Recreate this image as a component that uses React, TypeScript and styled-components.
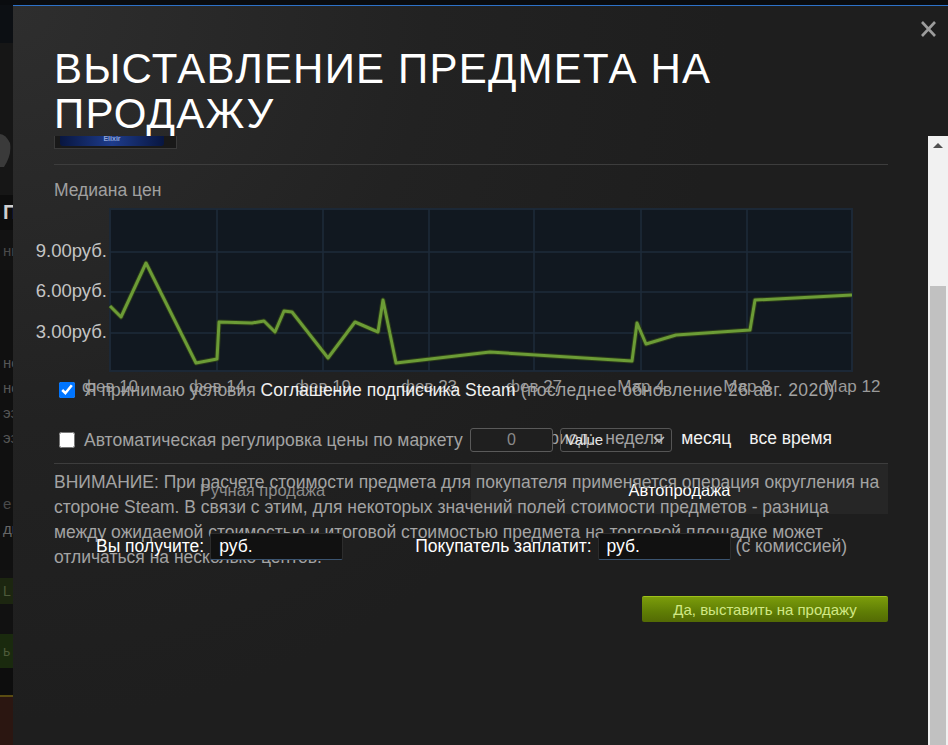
import styled, { createGlobalStyle } from "styled-components";

const GlobalStyle = createGlobalStyle`
  html, body {
    margin: 0;
    padding: 0;
    background: #0b0d10;
  }
  body {
    font-family: "Liberation Sans", Arial, sans-serif;
    overflow: hidden;
  }
`;

const points: [number, number][] = [
  [56, 100], [67, 111], [92, 57], [142, 157], [163, 153], [165, 116],
  [198, 117], [210, 115], [221, 126], [230, 105], [238, 106], [274, 152],
  [301, 116], [324, 126], [329, 94], [342, 157], [436, 146], [578, 155],
  [583, 117], [592, 138], [622, 129], [696, 124], [701, 94], [798, 89],
];

const xTicks = [
  { x: 56, label: "фев 10" },
  { x: 163, label: "фев 14" },
  { x: 269, label: "фев 19" },
  { x: 375, label: "фев 23" },
  { x: 480, label: "фев 27" },
  { x: 587, label: "Мар 4" },
  { x: 693, label: "Мар 8" },
  { x: 798, label: "Мар 12" },
];

const yTicks = [
  { y: 46, label: "9.00руб." },
  { y: 86, label: "6.00руб." },
  { y: 127, label: "3.00руб." },
];

const stripText = ["нс", "нс", "эз", "эз"];

function App() {
  const path = points.map(([x, y], i) => `${i ? "L" : "M"}${x} ${y}`).join(" ");
  return (
    <>
      <GlobalStyle />
      <Page>
        <TopBand />
        <Stage>
          <LeftStrip>
            <Band $h={38} $bg="#0c0f13" />
            <Band $h={152} $bg="#161616">
              <svg width="13" height="152">
                <path d="M-6 92 Q 4 88 10 100 Q 12 112 4 124 L -6 124 Z" fill="#3a3a3a" />
              </svg>
            </Band>
            <Band $h={35} $bg="#0d0d0d">
              <StripWord $color="#cfcfcf" $size={20} $bold>П</StripWord>
            </Band>
            <Band $h={40} $bg="#121212">
              <StripWord $color="#4a4a4a" $size={15}>нк</StripWord>
            </Band>
            <Band $h={300} $bg="#101010">
              <StripLines>
                {stripText.map((t, i) => (
                  <StripWord key={i} $color="#555" $size={15}>{t}</StripWord>
                ))}
                <StripGap />
                <StripWord $color="#4a4a4a" $size={15}>е</StripWord>
                <StripWord $color="#666" $size={15}>ди</StripWord>
              </StripLines>
            </Band>
            <Band $h={8} $bg="#121212" />
            <Band $h={26} $bg="#1c2610">
              <StripWord $color="#4d5a3a" $size={14}>L Г</StripWord>
            </Band>
            <Band $h={30} $bg="#111" />
            <Band $h={34} $bg="#1a2a0e">
              <StripWord $color="#4d5a3a" $size={14}>ь I</StripWord>
            </Band>
            <Band $h={27} $bg="#0d0d0d" />
            <Band $h={2} $bg="#5a4c12" />
            <Band $h={60} $bg="#2b1611" />
          </LeftStrip>

          <Modal>
            <CloseButton aria-label="close">
              <svg width="17" height="18" viewBox="0 0 17 18">
                <path d="M2 2 L15 16 M15 2 L2 16" stroke="#9c9c9c" strokeWidth="2.6" />
              </svg>
            </CloseButton>
            <Header>
              <Title>ВЫСТАВЛЕНИЕ ПРЕДМЕТА НА ПРОДАЖУ</Title>
            </Header>

            <Body>
              <Content>
                <ItemThumb>
                  <ThumbArt>Elixir</ThumbArt>
                </ItemThumb>
                <Rule $top={15} />
                <SectionLabel>Медиана цен</SectionLabel>

                <Chart width="834" height="170" viewBox="0 0 834 170">
                  <rect x="56" y="3" width="742" height="162" fill="#111820" stroke="#1c2836" strokeWidth="2" />
                  {xTicks.slice(1, -1).map((t) => (
                    <line key={t.x} x1={t.x} y1="3" x2={t.x} y2="165" stroke="#1e2b3a" strokeWidth="1.5" />
                  ))}
                  {yTicks.map((t) => (
                    <line key={t.y} x1="56" y1={t.y} x2="798" y2={t.y} stroke="#1e2b3a" strokeWidth="1.5" />
                  ))}
                  <path d={path} fill="none" stroke="#2a3a1a" strokeWidth="5" strokeLinejoin="round" />
                  <path d={path} fill="none" stroke="#6c9c36" strokeWidth="3" strokeLinejoin="round" />
                  {yTicks.map((t) => (
                    <AxisText key={t.label} x="53" y={t.y + 5} textAnchor="end" fill="#c4c4c4" $size={18.5}>
                      {t.label}
                    </AxisText>
                  ))}
                  {xTicks.map((t) => (
                    <AxisText key={t.label} x={t.x} y="186" textAnchor="middle" fill="#9a9a9a" $size={17}>
                      {t.label}
                    </AxisText>
                  ))}
                </Chart>

                <CheckRow $top={2}>
                  <Check type="checkbox" defaultChecked />
                  <span>
                    <Muted>Я принимаю условия </Muted>
                    <Bright>Соглашение подписчика Steam</Bright>
                    <Muted $spread> (последнее обновление 26 авг. 2020)</Muted>
                  </span>
                </CheckRow>

                <CheckRow $top={26}>
                  <Check type="checkbox" />
                  <Muted>Автоматическая регулировка цены по маркету</Muted>
                  <PriceInput>0</PriceInput>
                  <ValueSelect>
                    <span>Value</span>
                    <svg width="12" height="8" viewBox="0 0 12 8">
                      <path d="M1 1 L6 6 L11 1" fill="none" stroke="#bdbdbd" strokeWidth="1.6" />
                    </svg>
                  </ValueSelect>
                </CheckRow>

                <PeriodBar>
                  <PeriodOption $active={false} $label>Период:</PeriodOption>
                  <PeriodOption $active={false}>неделя</PeriodOption>
                  <PeriodOption $active>месяц</PeriodOption>
                  <PeriodOption $active>все время</PeriodOption>
                </PeriodBar>

                <Rule $top={11} />

                <Tabs>
                  <Tab $active={false}>Ручная продажа</Tab>
                  <Tab $active>Автопродажа</Tab>
                </Tabs>

                <Warning>
                  ВНИМАНИЕ: При расчете стоимости предмета для покупателя применяется операция округления на
                  стороне Steam. В связи с этим, для некоторых значений полей стоимости предметов - разница
                  между ожидаемой стоимостью и итоговой стоимостью предмета на торговой площадке может
                  отличаться на несколько центов.
                </Warning>

                <PurchaseRow>
                  <FieldLabel>Вы получите:</FieldLabel>
                  <PriceField>руб.</PriceField>
                  <FieldLabel $gap={67}>Покупатель заплатит:</FieldLabel>
                  <PriceField>руб.</PriceField>
                  <Muted>(с комиссией)</Muted>
                </PurchaseRow>

                <Actions>
                  <SellButton>Да, выставить на продажу</SellButton>
                </Actions>
              </Content>

              <Scrollbar>
                <ScrollArrow>
                  <svg width="12" height="6" viewBox="0 0 12 6">
                    <path d="M1 6 L6 1 L11 6 Z" fill="#505050" />
                  </svg>
                </ScrollArrow>
                <ScrollThumb />
              </Scrollbar>
            </Body>
          </Modal>
        </Stage>
      </Page>
    </>
  );
}

const Page = styled.div`
  width: 948px;
  height: 745px;
  display: flex;
  flex-direction: column;
  overflow: hidden;
`;

const TopBand = styled.div`
  height: 5px;
  background: #0a0c0f;
`;

const Stage = styled.div`
  flex: 1;
  display: flex;
  min-height: 0;
`;

const LeftStrip = styled.div`
  width: 13px;
  display: flex;
  flex-direction: column;
  overflow: hidden;
`;

const Band = styled.div<{ $h: number; $bg: string }>`
  flex: 0 0 ${({ $h }) => $h}px;
  background: ${({ $bg }) => $bg};
  display: flex;
  align-items: center;
  overflow: hidden;
`;

const StripLines = styled.div`
  display: flex;
  flex-direction: column;
  align-self: flex-start;
  padding-top: 80px;
`;

const StripGap = styled.div`
  height: 41px;
`;

const StripWord = styled.div<{ $color: string; $size: number; $bold?: boolean }>`
  color: ${({ $color }) => $color};
  font-size: ${({ $size }) => $size}px;
  font-weight: ${({ $bold }) => ($bold ? 700 : 400)};
  line-height: 25px;
  white-space: nowrap;
  margin-left: 3px;
`;

const Modal = styled.div`
  flex: 1;
  position: relative;
  display: flex;
  flex-direction: column;
  border-top: 1px solid #2d72c9;
  background: radial-gradient(circle at 0 0, #2e2e2e 0%, #222 35%, #1e1e1e 60%);
  min-width: 0;
`;

const CloseButton = styled.div`
  position: absolute;
  top: 14px;
  right: 11px;
  width: 17px;
  height: 18px;
  display: flex;
`;

const Header = styled.div`
  flex: 0 0 129px;
  box-sizing: border-box;
  padding: 40px 0 0 41px;
`;

const Title = styled.h1`
  margin: 0;
  width: 720px;
  font-size: 42px;
  line-height: 45px;
  font-weight: 400;
  letter-spacing: 1.2px;
  color: #ffffff;
`;

const Body = styled.div`
  flex: 1;
  display: flex;
  min-height: 0;
`;

const Content = styled.div`
  flex: 1;
  position: relative;
  padding: 0 40px 0 41px;
  display: flex;
  flex-direction: column;
  font-size: 17.5px;
  color: #a3a3a3;
`;

const ItemThumb = styled.div`
  width: 123px;
  height: 13px;
  box-sizing: border-box;
  border: 1px solid #3a3a3a;
  border-top: none;
  background: #191919;
  padding: 0 12px 2px 5px;
`;

const ThumbArt = styled.div`
  height: 100%;
  border-radius: 0 0 3px 3px;
  background: linear-gradient(to right, #081640, #1e3c8c 50%, #081640);
  color: #8fa4d8;
  font-size: 7px;
  font-weight: 700;
  text-align: center;
  line-height: 6px;
  overflow: hidden;
`;

const Rule = styled.div<{ $top: number }>`
  height: 1px;
  margin-top: ${({ $top }) => $top}px;
  background: #3d3d3d;
`;

const SectionLabel = styled.div`
  margin-top: 15px;
  line-height: 20px;
  color: #a0a0a0;
`;

const Chart = styled.svg`
  display: block;
  margin-top: 6px;
  overflow: visible;
`;

const AxisText = styled.text<{ $size: number }>`
  font-family: "Liberation Sans", Arial, sans-serif;
  font-size: ${({ $size }) => $size}px;
`;

const CheckRow = styled.div<{ $top: number }>`
  display: flex;
  align-items: center;
  height: 24px;
  margin-top: ${({ $top }) => $top}px;
  padding-left: 5px;
  white-space: nowrap;
`;

const Check = styled.input`
  width: 16px;
  height: 16px;
  margin: 0 9px 0 0;
`;

const Muted = styled.span<{ $spread?: boolean }>`
  color: #a3a3a3;
  letter-spacing: ${({ $spread }) => ($spread ? "0.35px" : "normal")};
`;

const Bright = styled.span`
  color: #f0f0f0;
`;

const PriceInput = styled.div`
  position: relative;
  z-index: 2;
  width: 83px;
  height: 24px;
  box-sizing: border-box;
  margin-left: 7px;
  border: 1px solid #5a5a5a;
  border-radius: 3px;
  background: #1f1f1f;
  color: #8a8a8a;
  text-align: center;
  line-height: 22px;
  font-size: 16px;
`;

const ValueSelect = styled.div`
  position: relative;
  z-index: 2;
  width: 112px;
  height: 24px;
  box-sizing: border-box;
  margin-left: 7px;
  border: 1px solid #555;
  border-radius: 3px;
  display: flex;
  align-items: flex-end;
  justify-content: space-between;
  padding: 0 6px 4px 5px;
  color: #e6e6e6;
  font-size: 15px;
  line-height: 15px;

  svg {
    margin-bottom: 3px;
  }
`;

const PeriodBar = styled.div`
  position: absolute;
  z-index: 1;
  top: 290px;
  left: 514px;
  height: 24px;
  display: flex;
  align-items: center;
  gap: 18px;
  white-space: nowrap;
`;

const PeriodOption = styled.span<{ $active: boolean; $label?: boolean }>`
  color: ${({ $active }) => ($active ? "#f2f2f2" : "#a3a3a3")};
  margin-right: ${({ $label }) => ($label ? "-6px" : "0")};
`;

const Tabs = styled.div`
  position: absolute;
  z-index: 0;
  top: 328px;
  left: 41px;
  width: 834px;
  height: 50px;
  display: grid;
  grid-template-columns: 1fr 1fr;
`;

const Tab = styled.div<{ $active: boolean }>`
  display: flex;
  align-items: center;
  justify-content: center;
  padding-top: 2px;
  font-size: 16.5px;
  color: ${({ $active }) => ($active ? "#ffffff" : "#8c8c8c")};
  background: ${({ $active }) => ($active ? "#262626" : "transparent")};
`;

const Warning = styled.p`
  position: relative;
  z-index: 1;
  max-width: 829px;
  margin: 6px 0 0;
  line-height: 25px;
  color: #a3a3a3;
`;

const PurchaseRow = styled.div`
  position: absolute;
  z-index: 2;
  top: 397px;
  left: 83px;
  height: 27px;
  display: flex;
  align-items: center;
  white-space: nowrap;
`;

const FieldLabel = styled.span<{ $gap?: number }>`
  color: #ffffff;
  margin-left: ${({ $gap }) => $gap ?? 0}px;
  margin-right: 6px;
`;

const PriceField = styled.div`
  width: 133px;
  height: 27px;
  box-sizing: border-box;
  margin-right: 5px;
  padding-left: 8px;
  border: 1px solid #2c2c2c;
  border-bottom-color: #3b5470;
  border-radius: 2px;
  background: #111111;
  color: #ffffff;
  line-height: 25px;
`;

const Actions = styled.div`
  display: flex;
  justify-content: flex-end;
  margin-top: 26px;
`;

const SellButton = styled.div`
  width: 246px;
  height: 26px;
  box-sizing: border-box;
  border-radius: 2px;
  border-top: 1px solid #9ec21a;
  background: linear-gradient(to bottom, #7b9c0b 0%, #5f7d05 60%, #536a04 100%);
  color: #d2e885;
  font-size: 15px;
  line-height: 25px;
  text-align: center;
`;

const Scrollbar = styled.div`
  width: 20px;
  background: #f1f1f1;
  display: flex;
  flex-direction: column;
`;

const ScrollArrow = styled.div`
  height: 17px;
  display: flex;
  align-items: center;
  justify-content: center;
`;

const ScrollThumb = styled.div`
  flex: 1;
  margin: 133px 2px 0;
  background: #c1c1c1;
`;

export default App;
